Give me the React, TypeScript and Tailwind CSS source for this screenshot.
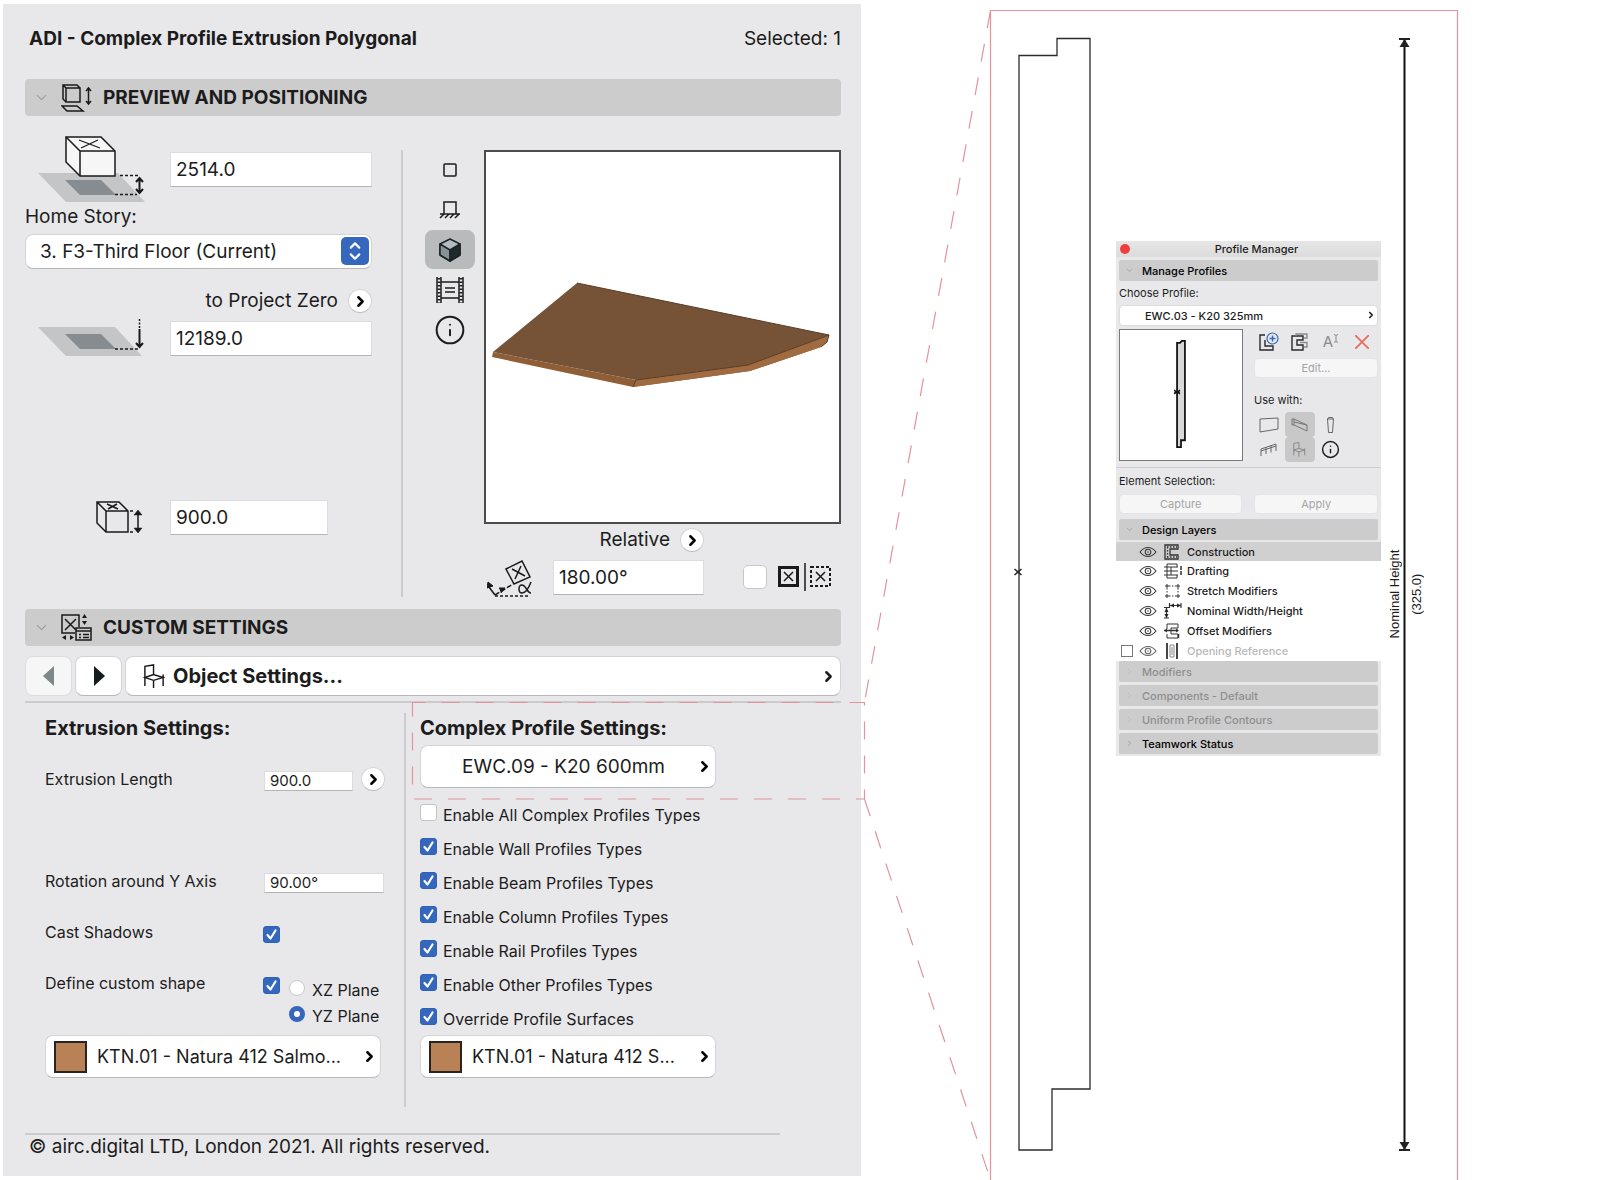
import type { ReactNode } from "react";
import { ChevronDown, ChevronRight, ChevronUp, Info } from "lucide-react";

const profileTypes = [
  { label: "Enable All Complex Profiles Types", checked: false },
  { label: "Enable Wall Profiles Types", checked: true },
  { label: "Enable Beam Profiles Types", checked: true },
  { label: "Enable Column Profiles Types", checked: true },
  { label: "Enable Rail Profiles Types", checked: true },
  { label: "Enable Other Profiles Types", checked: true },
  { label: "Override Profile Surfaces", checked: true },
];

const inputClass =
  "bg-white text-[#1c1c1c] outline-none border border-[#dcdcde] border-b-[#b4b4b6]";
const popupClass =
  "flex items-center rounded-lg bg-white border border-[#d4d4d6] border-b-[#b8b8ba]";

/* ---------- icons ---------- */

const BoxElevationIcon = () => (
  <svg width="108" height="68" viewBox="0 0 108 68" fill="none" stroke="#1a1a1a">
    <path d="M0 37h80l27 29H28z" fill="#c4c5c6" stroke="none" />
    <path d="M27 44h36l15 15H42z" fill="#868c8f" stroke="none" />
    <path d="M28 1h35l14 14v25H42L28 26z" fill="#f6f6f6" strokeWidth="1.5" />
    <path d="M28 1l14 14h35M42 15v25" strokeWidth="1.5" />
    <path d="M41 4l21 8M60 4l-17 8" strokeWidth="1.2" />
    <path d="M82 39.5h20M77 58.5h22" strokeWidth="1.5" strokeDasharray="3 2" />
    <path d="M101.5 42v15M98 46l3.5-4 3.5 4M98 53l3.5 4 3.5-4" strokeWidth="2" />
  </svg>
);

const ProjectZeroIcon = () => (
  <svg width="108" height="40" viewBox="0 0 108 40" fill="none" stroke="#1a1a1a">
    <path d="M0 8h77l27 29H28z" fill="#c4c5c6" stroke="none" />
    <path d="M27 15h36l15 15H42z" fill="#868c8f" stroke="none" />
    <path d="M77 30h23" strokeWidth="1.5" strokeDasharray="3 2" />
    <path d="M101.5 0v9" strokeWidth="1.5" strokeDasharray="2 1.5" />
    <path d="M101.5 10v18M98 24l3.5 4 3.5-4" strokeWidth="2" />
  </svg>
);

const BoxHeightIcon = () => (
  <svg width="48" height="33" viewBox="0 0 48 33" fill="none" stroke="#1a1a1a" strokeWidth="1.5">
    <path d="M1 1h22l9 9v21H10L1 22zM1 1l9 9h22M10 10v21" />
    <path d="M11 3l11 5M21 3l-9 5" />
    <path d="M34 10h3M34 31h3" />
    <path d="M42 11v19" />
    <path d="M38 14l4-5 4 5zM38 27l4 5 4-5z" fill="#1a1a1a" strokeWidth="0.5" />
  </svg>
);

const PreviewHeaderIcon = () => (
  <svg width="32" height="28" viewBox="0 0 32 28" fill="none" stroke="#1a1a1a" strokeWidth="1.5">
    <path d="M5 4h14v14H5zM5 18L2 15V1h14l3 3M2 1l3 3" />
    <path d="M1 22h15l6 5H6z" />
    <path d="M27.5 5v14M25 7l2.5-3L30 7M25 17l2.5 3 2.5-3" />
  </svg>
);

const CustomHeaderIcon = () => (
  <svg width="32" height="28" viewBox="0 0 32 28" fill="none" stroke="#1a1a1a" strokeWidth="1.5">
    <path d="M14 19H1V1h17v12M4 5l11 11M15 5L4 16" />
    <path d="M15 14h15v12H15zM15 17h15" />
    <path d="M18 20.5h2M22 20.5h6M18 23.5h2M22 23.5h6" />
    <path d="M21 4l2.5-4L26 4zM21 7h5l-2.5 4zM5 21l-4 2.5L5 26zM9 21l4 2.5L9 26z" fill="#1a1a1a" stroke="none" />
  </svg>
);

const ChairIcon = ({ size = 25, color = "#1a1a1a" }: { size?: number; color?: string }) => (
  <svg width={size} height={size} viewBox="0 0 24 26" fill="none" stroke={color} strokeWidth="1.5">
    <path d="M2 23V2.5L11 1v10M2 14l9-3 10 3-10 3zM11 17v8M21 11v12" />
  </svg>
);

const AngleIcon = () => (
  <svg width="46" height="38" viewBox="0 0 46 38" fill="none" stroke="#1a1a1a" strokeWidth="1.5">
    <path d="M19 9l16-8 8 16-16 7z" />
    <path d="M25 9l13 7M34 6l-6 13" />
    <path d="M2 27l6 8" />
    <path d="M8 35l18-11" strokeDasharray="5 2" />
    <path d="M8 36h35" strokeDasharray="3 2" />
    <path d="M0 28l1-6 5 4zM12 28h6l-4 5" fill="#1a1a1a" strokeWidth="1" />
    <path d="M44 22c-3 8-6 11-9 11-4 0-4-8 0-8 4 0 5 8 9 8" />
  </svg>
);

const FilmIcon = () => (
  <svg width="28" height="26" viewBox="0 0 28 26" fill="none" stroke="#1a1a1a" strokeWidth="1.5">
    <path d="M1 0v26M5 0v26M23 0v26M27 0v26M5 5h18M5 21h18M9 11h10M9 15h10" />
    <path d="M3 1v25M25 1v25" strokeWidth="3" strokeDasharray="1.5 2" />
  </svg>
);

const ViewSolidIcon = () => (
  <svg width="22" height="24" viewBox="0 0 22 24" stroke="#1b2326" strokeWidth="1.5" strokeLinejoin="round">
    <path d="M11 1l10 5v11l-10 6-10-6V6z" fill="#b4bbbe" />
    <path d="M1 6l10 6v11L1 17z" fill="#879297" />
    <path d="M21 6l-10 6v11l10-6z" fill="#20292c" />
  </svg>
);

const ViewPlanIcon = () => (
  <svg width="14" height="14" viewBox="0 0 14 14" fill="none" stroke="#1a1a1a" strokeWidth="1.5">
    <rect x="1" y="1" width="12" height="12" rx="1" />
  </svg>
);

const ViewElevationIcon = () => (
  <svg width="22" height="18" viewBox="0 0 22 18" fill="none" stroke="#1a1a1a" strokeWidth="1.5">
    <path d="M5 13V1h12v12M1 13h20M5 13l-4 4M10 13l-4 4M15 13l-4 4M20 13l-4 4" />
  </svg>
);

const EyeIcon = () => (
  <svg width="18" height="12" viewBox="0 0 18 12" fill="none" stroke="#3c3c3c" strokeWidth="1.1">
    <path d="M1 6c4.500-6 11.500-6 16 0-4.500 6-11.500 6-16 0z" />
    <circle cx="9" cy="6" r="2.800" />
    <circle cx="9" cy="6" r="0.800" fill="#3c3c3c" stroke="none" />
  </svg>
);

/* ---------- small building blocks ---------- */

const CheckBox = ({ id, checked = false }: { id?: string; checked?: boolean }) => (
  <span className="relative block h-[17px] w-[17px] shrink-0">
    <input
      id={id}
      type="checkbox"
      defaultChecked={checked}
      className="peer block h-full w-full appearance-none rounded-[3px] border border-[#c4c4c6] bg-white checked:border-[#2f62b5] checked:bg-[#3568bd]"
    />
    <svg
      viewBox="0 0 17 17"
      fill="none"
      stroke="white"
      strokeWidth="2.2"
      strokeLinecap="round"
      strokeLinejoin="round"
      className="pointer-events-none absolute inset-0 opacity-0 peer-checked:opacity-100"
    >
      <path d="M4.5 9l3 3.5 5-8" />
    </svg>
  </span>
);

const RoundButton = ({ label }: { label: string }) => (
  <button
    aria-label={label}
    className="flex h-6 w-6 shrink-0 items-center justify-center rounded-full border border-[#d4d4d6] border-b-[#bcbcbe] bg-white"
  >
    <ChevronRight size={17} strokeWidth={3.5} className="text-black" />
  </button>
);

const SectionHeader = ({ icon, children }: { icon: ReactNode; children: ReactNode }) => (
  <h2>
    <button
      aria-expanded="true"
      className="flex h-[37px] w-full items-center rounded-[4px] bg-[#ccc] pl-2 text-left text-[19px] font-bold"
    >
      <ChevronDown size={17} strokeWidth={1.5} className="mr-[11px] text-[#9c9c9c]" />
      <span className="mr-2.5">{icon}</span>
      {children}
    </button>
  </h2>
);

const SurfaceButton = ({ children }: { children: ReactNode }) => (
  <button className={`${popupClass} h-[43px] pl-2 pr-0.5 text-left text-lg`}>
    <span className="h-8 w-[33px] border-2 border-[#2a2420] bg-[#b88256]" />
    <span className="ml-2.5 flex-1 whitespace-nowrap">{children}</span>
    <ChevronRight size={17} strokeWidth={3.5} className="text-black" />
  </button>
);

/* ---------- object settings ---------- */

const Positioning = () => (
  <div className="flex h-[493px] pt-5">
    <div className="flex w-[347px] shrink-0 flex-col">
      <div className="flex h-[68px] items-start">
        <div className="ml-[13px] w-[132px]">
          <BoxElevationIcon />
        </div>
        <input aria-label="Elevation to home story" defaultValue="2514.0" className={`${inputClass} mt-4 h-[35px] w-0 flex-1 px-[5px]`} />
      </div>
      <label htmlFor="story" className="mt-px leading-6">Home Story:</label>
      <div className="relative mt-[5px]">
        <select id="story" className={`${popupClass} h-[35px] w-full appearance-none pl-3.5`}>
          <option>3. F3-Third Floor (Current)</option>
        </select>
        <span className="pointer-events-none absolute right-[3px] top-[3px] flex h-7 w-7 flex-col items-center justify-center rounded-[5px] bg-[#3568bd] text-white">
          <ChevronUp size={18} strokeWidth={3} className="-mb-1" />
          <ChevronDown size={18} strokeWidth={3} className="-mt-0.5" />
        </span>
      </div>
      <div className="mt-5 flex items-center justify-end gap-2.5">
        to Project Zero
        <RoundButton label="Choose reference level" />
      </div>
      <div className="mt-1.5 flex items-start">
        <div className="ml-[13px] w-[132px]">
          <ProjectZeroIcon />
        </div>
        <input aria-label="Elevation to project zero" defaultValue="12189.0" className={`${inputClass} mt-0.5 h-[35px] w-0 flex-1 px-[5px]`} />
      </div>
      <div className="mb-[74px] mt-auto flex items-center">
        <div className="ml-[71px] w-[74px]">
          <BoxHeightIcon />
        </div>
        <input aria-label="Height" defaultValue="900.0" className={`${inputClass} h-[35px] w-[158px] px-[5px]`} />
      </div>
    </div>

    <div className="mb-3 ml-[29px] mt-3.5 w-0.5 shrink-0 bg-[#ccccce]" />

    <div className="ml-[22px] mr-[9px] mt-3.5 flex w-[50px] shrink-0 flex-col gap-px">
      <button aria-label="2D symbol" className="flex h-[39px] items-center justify-center">
        <ViewPlanIcon />
      </button>
      <button aria-label="Elevation" className="flex h-[39px] items-center justify-center">
        <ViewElevationIcon />
      </button>
      <button aria-label="3D shaded" aria-pressed="true" className="flex h-[39px] items-center justify-center rounded-lg bg-[#b9babb]">
        <ViewSolidIcon />
      </button>
      <button aria-label="Preview picture" className="flex h-[39px] items-center justify-center">
        <FilmIcon />
      </button>
      <button aria-label="Info" className="flex h-[39px] items-center justify-center">
        <Info size={32} strokeWidth={1.5} />
      </button>
    </div>

    <div className="mt-3.5 min-w-0 flex-1">
      <div className="h-[374px] border-2 border-[#4c4c4c] bg-white">
        <svg viewBox="2 2 353 370" className="h-full w-full">
          <path d="M9 202l-1 5 141 30 117-16 71-24 6-5 2-7-81 30-112 15z" fill="#8f5d36" />
          <path d="M264 215l81-30-2 7-6 5-71 24-117 16 3-7z" fill="#a06b41" />
          <path d="M93 133l252 52-81 30-112 15L9 202z" fill="#765236" />
          <path d="M93 133l252 52-81 30-112 15-3 7M345 185l-2 7-6 5" fill="none" stroke="#5a3d26" />
        </svg>
      </div>
      <div className="mt-1 flex w-[220px] items-center justify-end gap-2.5">
        Relative
        <RoundButton label="Choose rotation mode" />
      </div>
      <div className="mt-1 flex items-center">
        <span className="ml-[3px] mr-5 mt-1">
          <AngleIcon />
        </span>
        <input aria-label="Rotation angle" defaultValue="180.00°" className={`${inputClass} h-[35px] w-[151px] px-[5px]`} />
        <input aria-label="Mirror" type="checkbox" className="ml-[39px] h-6 w-6 appearance-none rounded-[5px] border border-[#c8c8ca] bg-white" />
        <svg width="54" height="28" viewBox="0 0 54 28" fill="none" stroke="#1a1a1a" className="ml-[11px]">
          <path d="M1.5 4.5h18v18h-18z" strokeWidth="3" />
          <path d="M6 9l9 9M15 9l-9 9M38 9l9 9M47 9l-9 9" strokeWidth="1.5" />
          <path d="M27 0v28" strokeWidth="1.5" />
          <path d="M33 4h19v19H33z" strokeWidth="2" strokeDasharray="3 2" />
        </svg>
      </div>
    </div>
  </div>
);

const ExtrusionSettings = () => (
  <div className="ml-5 flex w-[340px] shrink-0 flex-col pt-[13px] text-base">
    <h3 className="text-xl font-bold leading-6">Extrusion Settings:</h3>
    <div className="mt-[27px] flex h-6 items-end">
      <label htmlFor="length" className="w-[219px] leading-6">Extrusion Length</label>
      <input id="length" defaultValue="900.0" className={`${inputClass} h-5 w-[89px] px-[5px] text-[15px]`} />
      <span className="ml-2">
        <RoundButton label="Extrusion length options" />
      </span>
    </div>
    <div className="mt-[78px] flex h-6 items-end">
      <label htmlFor="rotation" className="w-[219px] leading-6">Rotation around Y Axis</label>
      <input id="rotation" defaultValue="90.00°" className={`${inputClass} h-5 w-[120px] px-[5px] text-[15px]`} />
    </div>
    <div className="mt-[27px] flex items-start">
      <label htmlFor="shadows" className="w-[218px] leading-6">Cast Shadows</label>
      <div className="mt-1.5">
        <CheckBox id="shadows" checked />
      </div>
    </div>
    <div className="mt-[27px] flex items-start">
      <label htmlFor="shape" className="w-[218px] leading-6">Define custom shape</label>
      <div className="mt-1.5">
        <CheckBox id="shape" checked />
      </div>
      <div className="ml-[9px] mt-2 flex flex-col gap-1">
        {["XZ Plane", "YZ Plane"].map((plane) => (
          <label key={plane} className="flex items-start gap-[7px] leading-[22px]">
            <input
              type="radio"
              name="plane"
              defaultChecked={plane === "YZ Plane"}
              className="mt-px h-4 w-4 appearance-none rounded-full border border-[#c8c8ca] bg-white checked:border-[5px] checked:border-[#3568bd]"
            />
            {plane}
          </label>
        ))}
      </div>
    </div>
    <div className="mt-2 flex w-[336px] flex-col">
      <SurfaceButton>KTN.01 - Natura 412 Salmo...</SurfaceButton>
    </div>
  </div>
);

const ProfileSettings = () => (
  <div className="ml-[14px] pt-[13px]">
    <h3 className="text-xl font-bold leading-6">Complex Profile Settings:</h3>
    <button className={`${popupClass} mt-[5px] h-[43px] w-[296px] pl-[41px] pr-0.5 text-left`}>
      <span className="flex-1">EWC.09 - K20 600mm</span>
      <ChevronRight size={17} strokeWidth={3.5} className="text-black" />
    </button>
    <div className="mt-4 flex flex-col gap-3 text-base">
      {profileTypes.map(({ label, checked }) => (
        <label key={label} className="flex items-start gap-1.5 leading-[22px]">
          <CheckBox checked={checked} />
          {label}
        </label>
      ))}
    </div>
    <div className="mt-[5px] flex w-[296px] flex-col">
      <SurfaceButton>KTN.01 - Natura 412 S...</SurfaceButton>
    </div>
  </div>
);

const SettingsPanel = () => (
  <section className="my-1 bg-[#e8e8ea] pl-[22px] pr-5 text-[19px] leading-6">
    <header className="flex justify-between pl-1 pt-[23px]">
      <h1 className="font-bold">ADI - Complex Profile Extrusion Polygonal</h1>
      <span>Selected: 1</span>
    </header>
    <div className="mt-7">
      <SectionHeader icon={<PreviewHeaderIcon />}>PREVIEW AND POSITIONING</SectionHeader>
    </div>
    <Positioning />
    <SectionHeader icon={<CustomHeaderIcon />}>CUSTOM SETTINGS</SectionHeader>
    <div className="mt-2.5 flex gap-[3px]">
      <button aria-label="Previous page" disabled className="flex h-10 w-[47px] items-center justify-center rounded-lg border border-[#dcdcde] bg-[#f6f6f7]">
        <svg width="12" height="20" viewBox="0 0 12 20" fill="#7f8689"><path d="M11 0v20L0 10z" /></svg>
      </button>
      <button aria-label="Next page" className={`${popupClass} h-10 w-[47px] justify-center`}>
        <svg width="12" height="20" viewBox="0 0 12 20" fill="#141c1f"><path d="M1 0v20l11-10z" /></svg>
      </button>
      <button className={`${popupClass} h-10 flex-1 gap-1.5 pl-4 pr-[3px] text-left text-xl font-bold`}>
        <ChairIcon />
        <span className="flex-1">Object Settings...</span>
        <ChevronRight size={17} strokeWidth={3.5} />
      </button>
    </div>
    <hr className="mt-[5px] border-t-2 border-[#cbcbcd]" />
    <div className="flex h-[430px]">
      <ExtrusionSettings />
      <div className="mb-[26px] ml-[19px] mt-2.5 w-0.5 shrink-0 bg-[#ccccce]" />
      <ProfileSettings />
    </div>
    <footer className="mr-[61px] border-t-2 border-[#cbcbcd] pb-[17px] pl-1">
      © airc.digital LTD, London 2021. All rights reserved.
    </footer>
  </section>
);

/* ---------- profile manager window ---------- */

const layerIcons: Record<string, ReactNode> = {
  Construction: (
    <>
      <path d="M1 1h13v4H6v6h8v4H1z" strokeWidth="1.3" />
      <path d="M3 3h10M3.500 3v10M3 13h10" strokeWidth="1.3" strokeDasharray="1.5 1.5" />
    </>
  ),
  Drafting: (
    <>
      <path d="M0 4h14M0 8h14M0 12h14M3 1v14M7 4v8M3 1h10v3M3 15h10v-3" />
      <path d="M17 3v10" strokeWidth="1.5" strokeDasharray="4 1" />
    </>
  ),
  "Stretch Modifiers": (
    <>
      <path d="M5 3h7M5 13h7M3 5v6M14 5v6" strokeDasharray="1.5 1.5" />
      <path d="M1 3h4M3 1v4M12 3h4M14 1v4M1 13h4M3 11v4M12 13h4M14 11v4" />
    </>
  ),
  "Nominal Width/Height": (
    <>
      <path d="M5 2.5h12M5.5 0v5M17 0v5M2.5 4v11M0 4.5h5M0 15h5" strokeWidth="1.2" />
      <path d="M6 2.5l4-2v4zM17 2.5l-4-2v4zM2.5 5l2 4h-4zM2.5 15l2-4h-4z" fill="#222" stroke="none" />
    </>
  ),
  "Offset Modifiers": (
    <>
      <path d="M3 6V1h11v4H7v6h7v4H3v-4" />
      <path d="M0 7.5h14M14.500 11v4" strokeWidth="1.5" />
      <path d="M0 7.5l3-2v4zM15 7.5l-3-2v4z" fill="#333" stroke="none" />
    </>
  ),
  "Opening Reference": (
    <>
      <path d="M3 0v16M13 0v16" strokeWidth="1.8" />
      <path d="M6 2v12h4V2zM8 4v8" stroke="#888" />
    </>
  ),
};

const ManagerBar = ({ open = false, muted = false, children }: { open?: boolean; muted?: boolean; children: ReactNode }) => (
  <button
    aria-expanded={open}
    disabled={muted}
    className={`flex h-[21px] w-full items-center gap-2 rounded-[2px] bg-[#ccc] pl-1.5 text-left font-medium ${muted ? "text-[#8f8f8f]" : "text-black"}`}
  >
    {open ? (
      <ChevronDown size={9} strokeWidth={1.5} className="text-[#8a8a8a]" />
    ) : (
      <ChevronRight size={9} strokeWidth={1.5} className={muted ? "text-[#b4b4b4]" : "text-[#8a8a8a]"} />
    )}
    {children}
  </button>
);

const mutedButton = "h-5 rounded-[4px] border border-[#e4e4e6] bg-[#f6f6f7] text-center text-[#a4a4a4]";

const ProfileManager = () => (
  <section className="absolute left-[34.5%] top-[241px] w-[265px] bg-[#e8e8ea] text-[11px] leading-4 text-[#1c1c1c]">
    <header className="relative h-4 bg-gradient-to-b from-[#e6e6e6] to-[#dcdcdc] pl-4 text-center font-medium">
      <button aria-label="Close" className="absolute left-1 top-[3px] h-2.5 w-2.5 rounded-full bg-[#f0403c]" />
      Profile Manager
    </header>
    <div className="px-[3px] pt-[3px]">
      <ManagerBar open>Manage Profiles</ManagerBar>
      <label htmlFor="profile" className="mt-1 block">Choose Profile:</label>
      <div className="relative mt-1">
        <select id="profile" className="block h-[21px] w-full appearance-none rounded-[4px] border border-[#dcdcde] bg-white pl-[25px] text-[11px] font-medium">
          <option>EWC.03 - K20 325mm</option>
        </select>
        <ChevronRight size={10} strokeWidth={4} className="pointer-events-none absolute right-0.5 top-[5px]" />
      </div>
      <div className="mt-[3px] flex gap-[11px]">
        <svg viewBox="0 0 124 132" className="h-[132px] w-[124px] shrink-0 border border-[#7a7a7a] bg-white">
          <path d="M58 13h3l2-2h3v101h-4v7h-4z" fill="#d8d8d8" stroke="#111" strokeWidth="1.8" />
          <path d="M55 61l6 4M61 61l-6 4M55 63h6" stroke="#111" strokeWidth="1.2" />
        </svg>
        <div className="min-w-0 flex-1">
          <div className="mb-[3px] grid h-[26px] w-[123px] grid-cols-4 place-items-center">
            <button aria-label="New profile">
              <svg width="20" height="20" viewBox="0 0 20 20" fill="none" stroke="#2a2a2a" strokeWidth="1.4">
                <path d="M6 3H1v15h13v-4H6V8" />
                <circle cx="13.5" cy="6.5" r="5.5" stroke="#3568bd" strokeWidth="1.2" />
                <path d="M10.500 6.500h6M13.500 3.500v6" stroke="#3568bd" />
              </svg>
            </button>
            <button aria-label="Duplicate profile">
              <svg width="18" height="18" viewBox="0 0 18 18" fill="none" stroke="#2a2a2a" strokeWidth="1.4">
                <path d="M1 3h11v4H6v5h6v5H1z" />
                <path d="M5 3V1h11v4h-3M9 9.500h7V14h-3" stroke="#8a8a8a" />
              </svg>
            </button>
            <button aria-label="Rename profile" className="flex items-start text-[15px] text-[#8a8a8a]">
              A
              <svg width="6" height="9" viewBox="0 0 6 9" fill="none" stroke="#8a8a8a">
                <path d="M1 .5l2 1 2-1M3 1.5v6M1 8.5l2-1 2 1" />
              </svg>
            </button>
            <button aria-label="Delete profile">
              <svg width="14" height="14" viewBox="0 0 14 14" stroke="#ee6a5a" strokeWidth="1.8">
                <path d="M0 0l14 14M14 0L0 14" />
              </svg>
            </button>
          </div>
          <button disabled className={`${mutedButton} block w-full`}>Edit...</button>
          <p className="mt-[14px]">Use with:</p>
          <div className="mt-[4px] grid w-[92px] grid-cols-3">
            <button aria-label="Wall" className="flex h-[25px] items-center justify-center">
              <svg width="20" height="16" viewBox="0 0 20 16" fill="none" stroke="#666"><path d="M1 2l18-1v11L1 15z" /></svg>
            </button>
            <button aria-label="Beam" aria-pressed="true" className="flex h-[25px] items-center justify-center rounded-[4px] bg-[#c8c8c9]">
              <svg width="18" height="14" viewBox="0 0 18 14" fill="none" stroke="#777"><path d="M1 1v6h2l13 6V7L3 1zM3 1v6M3 4l13 3" /></svg>
            </button>
            <button aria-label="Column" className="flex h-[25px] items-center justify-center">
              <svg width="7" height="16" viewBox="0 0 7 16" fill="none" stroke="#666"><path d="M.5 2l1-1.5h4l1 1.5-1 13.5h-4zM.5 2h6" /></svg>
            </button>
            <button aria-label="Rail" className="flex h-[25px] items-center justify-center">
              <svg width="18" height="14" viewBox="0 0 18 14" fill="none" stroke="#666"><path d="M1 13V6l15-5v7M1 8l15-5M6 4v7M11 2.5v7" /></svg>
            </button>
            <button aria-label="Object" aria-pressed="true" className="flex h-[25px] items-center justify-center rounded-[4px] bg-[#c8c8c9]">
              <ChairIcon size={15} color="#808080" />
            </button>
            <button aria-label="Info" className="flex h-[25px] items-center justify-center">
              <Info size={19} strokeWidth={1.8} />
            </button>
          </div>
        </div>
      </div>
    </div>
    <hr className="mt-[5px] border-[#cfcfd1]" />
    <div className="px-[3px] pt-[5px]">
      <p>Element Selection:</p>
      <div className="mb-[5px] mt-[5px] grid grid-cols-2 gap-3">
        <button disabled className={mutedButton}>Capture</button>
        <button disabled className={mutedButton}>Apply</button>
      </div>
      <ManagerBar open>Design Layers</ManagerBar>
    </div>
    <ul className="mt-[2px] bg-white font-medium">
      {Object.keys(layerIcons).map((name) => {
        const off = name === "Opening Reference";
        return (
          <li
            key={name}
            className={`flex items-center pl-[5px] ${name === "Construction" ? "h-[19px] bg-[#d0d0d0]" : "h-5"} ${off ? "text-[#b8b8b8]" : ""}`}
          >
            <span className="w-[18px]">
              {off && (
                <input aria-label={name} type="checkbox" className="block h-3 w-3 appearance-none border border-[#777] bg-white" />
              )}
            </span>
            <button aria-label={`Show ${name}`} className={off ? "opacity-80" : ""}>
              <EyeIcon />
            </button>
            <svg width="18" height="16" viewBox="0 0 18 16" fill="none" stroke="#333" className="ml-[7px] mr-[5px]">
              {layerIcons[name]}
            </svg>
            {name}
          </li>
        );
      })}
    </ul>
    <div className="flex flex-col gap-[3px] px-[3px] pb-0.5">
      <ManagerBar muted>Modifiers</ManagerBar>
      <ManagerBar muted>Components - Default</ManagerBar>
      <ManagerBar muted>Uniform Profile Contours</ManagerBar>
      <ManagerBar>Teamwork Status</ManagerBar>
    </div>
  </section>
);

/* Profile section drawing, its frame and the leader lines back to the settings. */
const Drawing = () => (
  <svg
    viewBox="0 0 1600 1180"
    preserveAspectRatio="none"
    fill="none"
    className="pointer-events-none absolute inset-0 h-full w-full"
  >
    <path d="M1019 55.5h38v-17h33v1050.500h-38v61h-33z" stroke="#2c2c2c" strokeWidth="1.3" />
    <path d="M1014.5 569l7 6M1021.5 569l-7 6" stroke="#222" strokeWidth="1.5" />
    <path d="M1404.5 40v1110" stroke="#111" strokeWidth="2" />
    <path d="M1399 39h11M1399 1150h11" stroke="#222" strokeWidth="2" />
    <path d="M1404.5 39l5 8h-10zM1404.5 1150l5-8h-10z" fill="#222" />
    <g stroke="#e2939b" strokeWidth="1.2">
      <path d="M990.5 1180V10.5h467V1180" />
      <path d="M412.5 702.5h452v96.500h-452z" strokeDasharray="18 16" strokeDashoffset="5" />
      <path d="M990.5 10.5L864.5 702.5M864.5 799l126 381" strokeDasharray="18 16" />
    </g>
  </svg>
);

export default function App() {
  return (
    <main className="relative grid min-h-screen grid-cols-[858fr_739fr] bg-white pl-[3px] font-['Inter','Liberation_Sans',sans-serif] text-[#1c1c1c]">
      <SettingsPanel />
      <div className="relative">
        <ProfileManager />
        <div className="absolute left-[71.2%] top-[594px] flex -translate-y-1/2 items-center gap-1.5 font-['Liberation_Sans',sans-serif] text-[13px] leading-4">
          <span className="rotate-180 [writing-mode:vertical-rl]">Nominal Height</span>
          <span className="rotate-180 [writing-mode:vertical-rl]">(325.0)</span>
        </div>
      </div>
      <Drawing />
    </main>
  );
}
